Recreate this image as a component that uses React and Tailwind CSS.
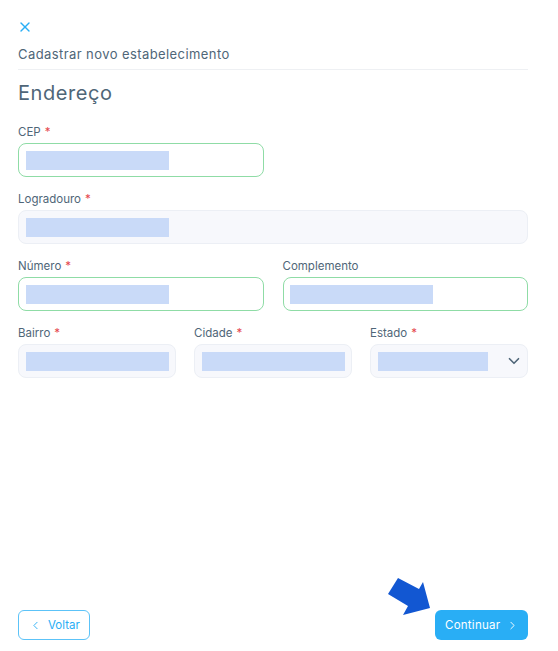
import { ChevronDown, ChevronLeft, ChevronRight, X } from "lucide-react";

const font = { fontFamily: "Inter, 'Noto Sans', sans-serif" };

function Field({ label, required, valid, select, barClass = "w-[143px]" }) {
  return (
    <div className="min-w-0">
      <label className="block h-[14px] text-[11.5px] leading-[14px] text-[#4f6678]">
        {label}
        {required && <span className="ml-1 text-[#e5484d]">*</span>}
      </label>
      <div
        className={`mt-[4px] flex h-[34px] items-center justify-between rounded-lg border pl-[6.5px] pr-[4px] ${
          valid ? "border-[#8fdca6] bg-white" : "border-[#eceff5] bg-[#f7f8fc]"
        }`}
      >
        <div className={`h-[19px] bg-[#c9daf8] ${barClass}`} />
        {select && <ChevronDown size={18} strokeWidth={2.2} className="text-[#4f6678]" />}
      </div>
    </div>
  );
}

export default function App() {
  return (
    <div style={font} className="relative flex h-[651px] w-[558px] flex-col bg-white pl-[18px] pr-[30px] pt-[19px] pb-[11px]">
      <X size={16} strokeWidth={2} className="-ml-px text-[#29aef5]" />
      <h2 className="mt-[10px] text-[13px] leading-[18px] tracking-[0.42px] text-[#4f6678]">Cadastrar novo estabelecimento</h2>
      <div className="mt-[6px] h-px bg-[#eef0f3]" />
      <h1 className="mt-[10px] text-[20px] leading-[26px] tracking-[0.55px] text-[#4f6678]">Endereço</h1>

      <div className="mt-[19px] flex flex-col gap-[15px]">
        <div className="w-[246px]">
          <Field label="CEP" required valid />
        </div>
        <Field label="Logradouro" required />
        <div className="grid grid-cols-2 gap-[19px]">
          <Field label="Número" required valid />
          <Field label="Complemento" valid />
        </div>
        <div className="grid grid-cols-3 gap-[18px]">
          <Field label="Bairro" required />
          <Field label="Cidade" required />
          <Field label="Estado" required select barClass="w-[110px]" />
        </div>
      </div>

      <div className="mt-auto flex items-center justify-between">
        <button className="flex h-[30px] w-[72px] items-center gap-[6px] rounded-md border border-[#5cc3f8] bg-white pl-[10px] pt-px text-[11.5px] text-[#29aef5]">
          <ChevronLeft size={13} strokeWidth={1.7} />
          Voltar
        </button>
        <button className="flex h-[30px] w-[93px] items-center gap-[6px] rounded-md bg-[#29aef5] pl-[10px] pt-px text-[11.5px] tracking-[0.25px] text-white">
          Continuar
          <ChevronRight size={13} strokeWidth={1.7} />
        </button>
      </div>

      <svg className="absolute left-[386px] top-[576px]" width="46" height="41" viewBox="386 576 46 41">
        <polygon points="398,578 419,589 423,582 430,608 403,615 408,606 388,594" fill="#1257d2" />
      </svg>
    </div>
  );
}
